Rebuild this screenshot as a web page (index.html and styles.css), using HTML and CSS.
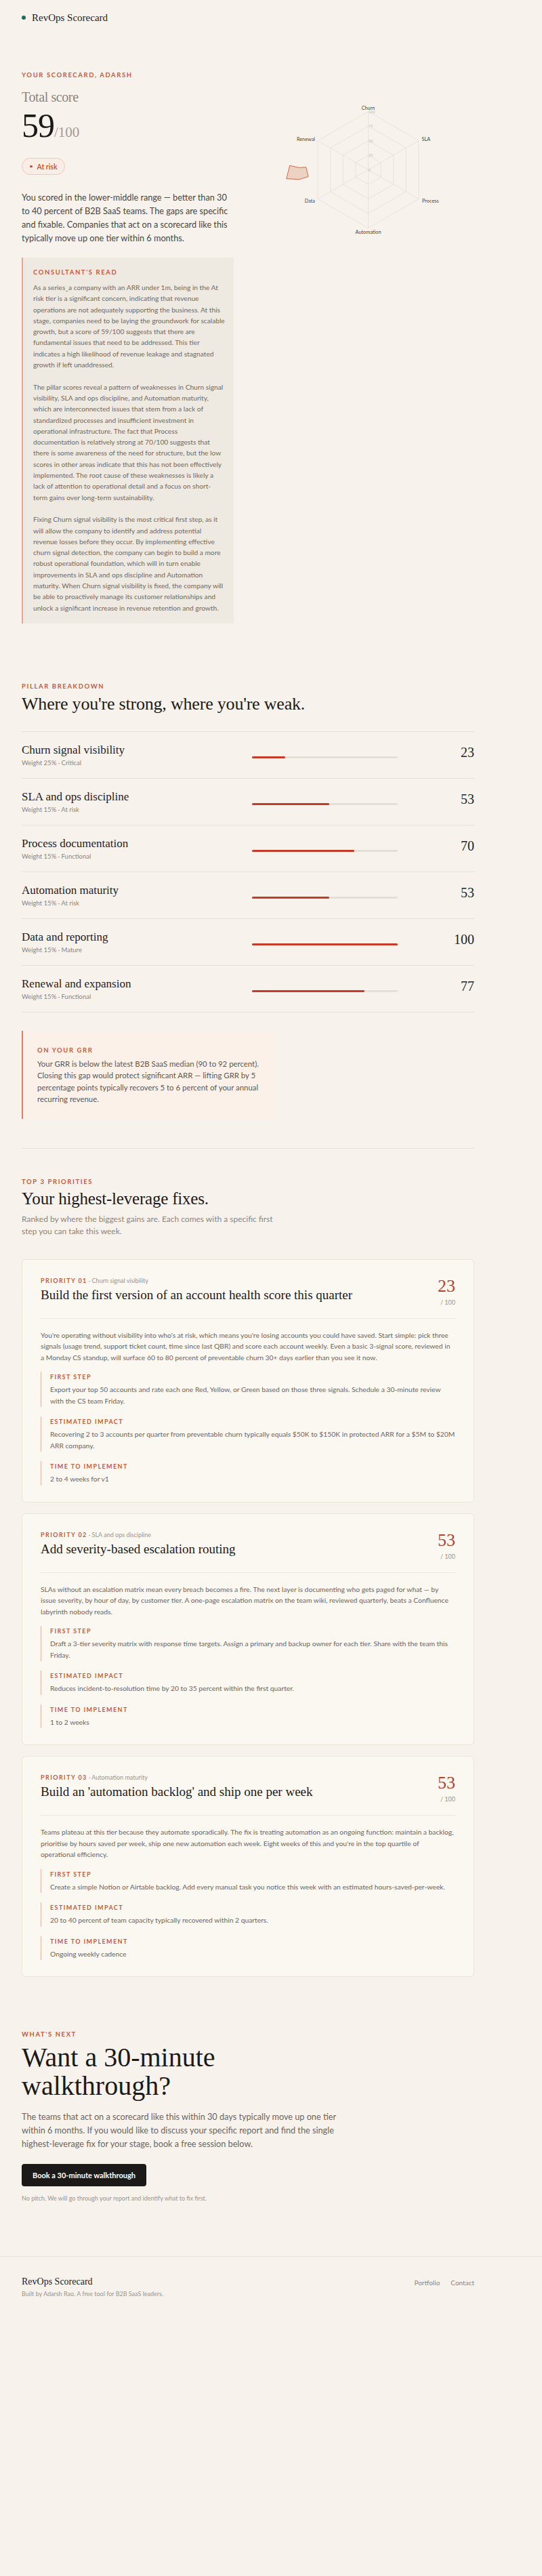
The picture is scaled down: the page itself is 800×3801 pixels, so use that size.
FILE: index.html
```html
<!DOCTYPE html>
<html lang="en">
<head>
<meta charset="utf-8">
<title>RevOps Scorecard</title>
<link rel="stylesheet" href="styles.css">
</head>
<body>
<header class="topbar">
  <span class="brand-dot"></span>
  <span class="brand">RevOps Scorecard</span>
</header>

<main class="wrap">
  <section class="hero">
    <div class="hero-main">
      <p class="eyebrow">Your scorecard, Adarsh</p>
      <p class="total-label">Total score</p>
      <p class="total"><span class="total-num">59</span><span class="total-den">/100</span></p>
      <span class="pill"><span class="pill-dot"></span>At risk</span>
      <p class="lead">You scored in the lower-middle range — better than 30 to 40 percent of B2B SaaS teams. The gaps are specific and fixable. Companies that act on a scorecard like this typically move up one tier within 6 months.</p>
      <div class="read">
        <p class="read-label">Consultant's read</p>
        <p class="read-text">As a series_a company with an ARR under 1m, being in the At risk tier is a significant concern, indicating that revenue operations are not adequately supporting the business. At this stage, companies need to be laying the groundwork for scalable growth, but a score of 59/100 suggests that there are fundamental issues that need to be addressed. This tier indicates a high likelihood of revenue leakage and stagnated growth if left unaddressed.</p>
        <p class="read-text">The pillar scores reveal a pattern of weaknesses in Churn signal visibility, SLA and ops discipline, and Automation maturity, which are interconnected issues that stem from a lack of standardized processes and insufficient investment in operational infrastructure. The fact that Process documentation is relatively strong at 70/100 suggests that there is some awareness of the need for structure, but the low scores in other areas indicate that this has not been effectively implemented. The root cause of these weaknesses is likely a lack of attention to operational detail and a focus on short-term gains over long-term sustainability.</p>
        <p class="read-text">Fixing Churn signal visibility is the most critical first step, as it will allow the company to identify and address potential revenue losses before they occur. By implementing effective churn signal detection, the company can begin to build a more robust operational foundation, which will in turn enable improvements in SLA and ops discipline and Automation maturity. When Churn signal visibility is fixed, the company will be able to proactively manage its customer relationships and unlock a significant increase in revenue retention and growth.</p>
      </div>
    </div>
    <div class="hero-chart">
      <svg class="radar" width="312" height="270" viewBox="388 104 312 270" xmlns="http://www.w3.org/2000/svg">
        <g class="grid-lines" fill="none" stroke="#e4dfd6" stroke-width="0.8">
          <polygon points="543.5,164.5 618,207.5 618,293.5 543.5,336.5 469,293.5 469,207.5"/>
          <polygon points="543.5,186 599.4,218.3 599.4,282.8 543.5,315 487.6,282.8 487.6,218.3"/>
          <polygon points="543.5,207.5 580.7,229 580.7,272 543.5,293.5 506.3,272 506.3,229"/>
          <polygon points="543.5,229 562.1,239.8 562.1,261.3 543.5,272 524.9,261.3 524.9,239.8"/>
          <line x1="543.5" y1="250.5" x2="543.5" y2="164.5"/>
          <line x1="543.5" y1="250.5" x2="618" y2="207.5"/>
          <line x1="543.5" y1="250.5" x2="618" y2="293.5"/>
          <line x1="543.5" y1="250.5" x2="543.5" y2="336.5"/>
          <line x1="543.5" y1="250.5" x2="469" y2="293.5"/>
          <line x1="543.5" y1="250.5" x2="469" y2="207.5"/>
        </g>
        <g class="ticks" font-family="Lato, sans-serif" font-size="5.6" fill="#c4beb5">
          <text x="544" y="166.5">100</text>
          <text x="544" y="188">75</text>
          <text x="544" y="209.5">50</text>
          <text x="544" y="231">25</text>
          <text x="544" y="252.5">0</text>
        </g>
        <g class="axis-labels" font-family="Lato, sans-serif" font-size="7.3" fill="#4a4641">
          <text x="543.5" y="161.5" text-anchor="middle">Churn</text>
          <text x="622.5" y="207.5">SLA</text>
          <text x="623" y="298.8">Process</text>
          <text x="543.5" y="344.8" text-anchor="middle">Automation</text>
          <text x="465" y="298.8" text-anchor="end">Data</text>
          <text x="465" y="207.5" text-anchor="end">Renewal</text>
        </g>
        <polygon class="shape" points="427.7,244.3 441.7,247.3 451.7,246.7 455,260.7 441.7,264.7 422.7,263.7" fill="#ecd2c2" stroke="#cf5a3d" stroke-width="0.9"/>
      </svg>
    </div>
  </section>

  <section class="pillars">
    <p class="eyebrow">Pillar breakdown</p>
    <h2 class="section-title">Where you're strong, where you're weak.</h2>
    <div class="pillar-list">
      <div class="pillar">
        <div class="pillar-info"><p class="pillar-name">Churn signal visibility</p><p class="pillar-meta">Weight 25% · Critical</p></div>
        <div class="bar"><div class="bar-fill" style="width:23%"></div></div>
        <p class="pillar-score">23</p>
      </div>
      <div class="pillar">
        <div class="pillar-info"><p class="pillar-name">SLA and ops discipline</p><p class="pillar-meta">Weight 15% · At risk</p></div>
        <div class="bar"><div class="bar-fill" style="width:53%"></div></div>
        <p class="pillar-score">53</p>
      </div>
      <div class="pillar">
        <div class="pillar-info"><p class="pillar-name">Process documentation</p><p class="pillar-meta">Weight 15% · Functional</p></div>
        <div class="bar"><div class="bar-fill" style="width:70%"></div></div>
        <p class="pillar-score">70</p>
      </div>
      <div class="pillar">
        <div class="pillar-info"><p class="pillar-name">Automation maturity</p><p class="pillar-meta">Weight 15% · At risk</p></div>
        <div class="bar"><div class="bar-fill" style="width:53%"></div></div>
        <p class="pillar-score">53</p>
      </div>
      <div class="pillar">
        <div class="pillar-info"><p class="pillar-name">Data and reporting</p><p class="pillar-meta">Weight 15% · Mature</p></div>
        <div class="bar"><div class="bar-fill" style="width:100%"></div></div>
        <p class="pillar-score">100</p>
      </div>
      <div class="pillar">
        <div class="pillar-info"><p class="pillar-name">Renewal and expansion</p><p class="pillar-meta">Weight 15% · Functional</p></div>
        <div class="bar"><div class="bar-fill" style="width:77%"></div></div>
        <p class="pillar-score">77</p>
      </div>
    </div>

    <div class="grr">
      <p class="grr-label">On your GRR</p>
      <p class="grr-text">Your GRR is below the latest B2B SaaS median (90 to 92 percent). Closing this gap would protect significant ARR — lifting GRR by 5 percentage points typically recovers 5 to 6 percent of your annual recurring revenue.</p>
    </div>
  </section>

  <section class="priorities">
    <p class="eyebrow">Top 3 priorities</p>
    <h2 class="section-title">Your highest-leverage fixes.</h2>
    <p class="section-sub">Ranked by where the biggest gains are. Each comes with a specific first step you can take this week.</p>

    <article class="card">
      <div class="card-head">
        <div>
          <p class="card-kicker"><span class="kicker-num">Priority 01</span> · <span class="kicker-pillar">Churn signal visibility</span></p>
          <h3 class="card-title">Build the first version of an account health score this quarter</h3>
        </div>
        <div class="card-score"><p class="score-num">23</p><p class="score-den">/ 100</p></div>
      </div>
      <p class="card-body">You're operating without visibility into who's at risk, which means you're losing accounts you could have saved. Start simple: pick three signals (usage trend, support ticket count, time since last QBR) and score each account weekly. Even a basic 3-signal score, reviewed in a Monday CS standup, will surface 60 to 80 percent of preventable churn 30+ days earlier than you see it now.</p>
      <div class="detail"><p class="detail-label">First step</p><p class="detail-text">Export your top 50 accounts and rate each one Red, Yellow, or Green based on those three signals. Schedule a 30-minute review with the CS team Friday.</p></div>
      <div class="detail"><p class="detail-label">Estimated impact</p><p class="detail-text">Recovering 2 to 3 accounts per quarter from preventable churn typically equals $50K to $150K in protected ARR for a $5M to $20M ARR company.</p></div>
      <div class="detail"><p class="detail-label">Time to implement</p><p class="detail-text">2 to 4 weeks for v1</p></div>
    </article>

    <article class="card">
      <div class="card-head">
        <div>
          <p class="card-kicker"><span class="kicker-num">Priority 02</span> · <span class="kicker-pillar">SLA and ops discipline</span></p>
          <h3 class="card-title">Add severity-based escalation routing</h3>
        </div>
        <div class="card-score"><p class="score-num">53</p><p class="score-den">/ 100</p></div>
      </div>
      <p class="card-body">SLAs without an escalation matrix mean every breach becomes a fire. The next layer is documenting who gets paged for what — by issue severity, by hour of day, by customer tier. A one-page escalation matrix on the team wiki, reviewed quarterly, beats a Confluence labyrinth nobody reads.</p>
      <div class="detail"><p class="detail-label">First step</p><p class="detail-text">Draft a 3-tier severity matrix with response time targets. Assign a primary and backup owner for each tier. Share with the team this Friday.</p></div>
      <div class="detail"><p class="detail-label">Estimated impact</p><p class="detail-text">Reduces incident-to-resolution time by 20 to 35 percent within the first quarter.</p></div>
      <div class="detail"><p class="detail-label">Time to implement</p><p class="detail-text">1 to 2 weeks</p></div>
    </article>

    <article class="card">
      <div class="card-head">
        <div>
          <p class="card-kicker"><span class="kicker-num">Priority 03</span> · <span class="kicker-pillar">Automation maturity</span></p>
          <h3 class="card-title">Build an 'automation backlog' and ship one per week</h3>
        </div>
        <div class="card-score"><p class="score-num">53</p><p class="score-den">/ 100</p></div>
      </div>
      <p class="card-body">Teams plateau at this tier because they automate sporadically. The fix is treating automation as an ongoing function: maintain a backlog, prioritise by hours saved per week, ship one new automation each week. Eight weeks of this and you're in the top quartile of operational efficiency.</p>
      <div class="detail"><p class="detail-label">First step</p><p class="detail-text">Create a simple Notion or Airtable backlog. Add every manual task you notice this week with an estimated hours-saved-per-week.</p></div>
      <div class="detail"><p class="detail-label">Estimated impact</p><p class="detail-text">20 to 40 percent of team capacity typically recovered within 2 quarters.</p></div>
      <div class="detail"><p class="detail-label">Time to implement</p><p class="detail-text">Ongoing weekly cadence</p></div>
    </article>
  </section>

  <section class="next">
    <p class="eyebrow">What's next</p>
    <h2 class="next-title">Want a 30-minute walkthrough?</h2>
    <p class="next-text">The teams that act on a scorecard like this within 30 days typically move up one tier within 6 months. If you would like to discuss your specific report and find the single highest-leverage fix for your stage, book a free session below.</p>
    <a class="btn" href="#">Book a 30-minute walkthrough</a>
    <p class="next-note">No pitch. We will go through your report and identify what to fix first.</p>
  </section>
</main>

<footer class="footer">
  <div class="footer-inner">
    <div>
      <p class="footer-brand">RevOps Scorecard</p>
      <p class="footer-note">Built by Adarsh Rao. A free tool for B2B SaaS leaders.</p>
    </div>
    <nav class="footer-links"><a href="#">Portfolio</a><a href="#">Contact</a></nav>
  </div>
</footer>
</body>
</html>
```

FILE: styles.css
```css
* { box-sizing: border-box; }
html, body { margin: 0; padding: 0; }
body {
  background: #f7f3ec;
  color: #24211e;
  font-family: Lato, "Noto Sans", sans-serif;
}
p, h2, h3 { margin: 0; }
a { color: inherit; text-decoration: none; }

.topbar {
  display: flex;
  align-items: center;
  gap: 9px;
  padding: 16px 32px 0;
  height: 36px;
}
.brand-dot {
  width: 6px; height: 6px; border-radius: 50%;
  background: #1d6b58;
}
.brand {
  font-family: "Liberation Serif", serif;
  font-size: 15px;
  line-height: 20px;
  color: #24211e;
}

.wrap {
  width: 668px;
  margin-left: 32px;
}

.eyebrow {
  font-size: 9.5px;
  line-height: 14px;
  letter-spacing: 1.6px;
  text-transform: uppercase;
  color: #c65a3e;
  font-weight: 700;
}

.hero {
  display: grid;
  grid-template-columns: 313px 1fr;
  column-gap: 43px;
  margin-top: 68px;
}
.hero-main { display: flex; flex-direction: column; align-items: flex-start; }
.total-label {
  margin-top: 13px;
  font-family: "Liberation Serif", serif;
  font-size: 20px;
  line-height: 24px;
  color: #8b857d;
  letter-spacing: -0.4px;
}
.total {
  margin-top: 4px;
  line-height: 52px;
  font-family: "Liberation Serif", serif;
  white-space: nowrap;
}
.total-num { font-size: 50px; color: #1c1a18; letter-spacing: -1px; }
.total-den { font-size: 21px; color: #a19b93; }
.pill {
  margin-top: 10px;
  display: inline-flex;
  align-items: center;
  gap: 7px;
  height: 25px;
  padding: 0 11px 0 11px;
  border: 1px solid #efc8b6;
  border-radius: 13px;
  background: #f9eee6;
  color: #c24a2e;
  font-size: 10.5px;
  font-weight: 600;
}
.pill-dot { width: 3.5px; height: 3.5px; border-radius: 50%; background: #c24a2e; }
.lead {
  margin-top: 23px;
  font-size: 12.7px;
  line-height: 20px;
  color: #4a4540;
}
.read {
  margin-top: 19px;
  width: 313px;
  background: #efeae1;
  border-left: 2px solid #e2a892;
  padding: 15px 13px 15px 15px;
}
.read-label {
  font-size: 9.5px;
  line-height: 14px;
  letter-spacing: 1.6px;
  text-transform: uppercase;
  color: #c65a3e;
  font-weight: 700;
  margin-bottom: 7px;
}
.read-text {
  font-size: 10.2px;
  line-height: 16.3px;
  color: #6f6962;
}
.read-text + .read-text { margin-top: 16.3px; }

.hero-chart { align-self: start; }
.radar { display: block; }

.pillars { margin-top: 86px; }
.section-title {
  margin-top: 3px;
  font-family: "Liberation Serif", serif;
  font-weight: 400;
  font-size: 26px;
  line-height: 32px;
  color: #1c1a18;
  letter-spacing: -0.2px;
}
.pillar-list {
  margin-top: 24px;
  border-top: 1px solid #e7e2d9;
}
.pillar {
  display: grid;
  grid-template-columns: 340px 215px 1fr;
  align-items: center;
  padding: 16px 0 15px;
  border-bottom: 1px solid #e7e2d9;
}
.pillar-name {
  font-family: "Liberation Serif", serif;
  font-size: 17px;
  line-height: 22px;
  color: #24211e;
}
.pillar-meta {
  margin-top: 1px;
  font-size: 9.5px;
  line-height: 14px;
  color: #8b857d;
}
.bar {
  height: 3px;
  background: #e4e0d8;
  border-radius: 2px;
  margin-top: 6px;
}
.bar-fill { height: 3px; background: #c53b28; border-radius: 2px; }
.pillar-score {
  text-align: right;
  font-family: "Liberation Serif", serif;
  font-size: 20px;
  line-height: 24px;
  align-self: start;
  margin-top: 2px;
  color: #24211e;
}

.grr {
  margin-top: 27px;
  width: 375px;
  background: #fbf1e9;
  border-left: 2px solid #d9806a;
  padding: 22px 14px 20px 21px;
}
.grr-label {
  font-size: 9.5px;
  line-height: 14px;
  letter-spacing: 1.6px;
  text-transform: uppercase;
  color: #c65a3e;
  font-weight: 700;
  margin-bottom: 4px;
}
.grr-text {
  font-size: 11.4px;
  line-height: 17.5px;
  color: #5d5751;
}

.priorities {
  margin-top: 43px;
  border-top: 1px solid #e7e2d9;
  padding-top: 42px;
}
.priorities .section-title { font-size: 25px; line-height: 30px; }
.section-sub {
  margin-top: 6px;
  font-size: 12px;
  line-height: 18px;
  color: #8b857d;
  max-width: 372px;
}
.card {
  margin-top: 32px;
  background: #fbf8f2;
  border: 1px solid #ebe5da;
  border-radius: 6px;
  padding: 25px 27px 24px;
}
.card + .card { margin-top: 16px; }
.card-head {
  display: flex;
  justify-content: space-between;
  align-items: flex-start;
  padding-bottom: 17px;
  border-bottom: 1px solid #ede8df;
}
.card-kicker {
  font-size: 9px;
  line-height: 12px;
  color: #9a948c;
}
.kicker-num {
  color: #c65a3e;
  font-weight: 700;
  letter-spacing: 1.4px;
  text-transform: uppercase;
}
.card-title {
  margin-top: 3px;
  font-family: "Liberation Serif", serif;
  font-weight: 400;
  font-size: 19px;
  line-height: 24px;
  color: #1c1a18;
}
.card-score { text-align: right; }
.score-num {
  font-family: "Liberation Serif", serif;
  font-size: 26px;
  line-height: 28px;
  color: #b5412c;
}
.score-den {
  margin-top: 4px;
  font-size: 9px;
  line-height: 12px;
  color: #9a948c;
}
.card-body {
  margin-top: 16px;
  font-size: 10.3px;
  line-height: 16.5px;
  color: #6b655e;
}
.detail {
  margin-top: 14px;
  border-left: 1px solid #e6b4a2;
  padding: 2px 0 1px 13px;
}
.card-body + .detail { margin-top: 13px; }
.detail-label {
  font-size: 9px;
  line-height: 12px;
  letter-spacing: 1.4px;
  text-transform: uppercase;
  color: #c65a3e;
  font-weight: 700;
  margin-bottom: 4px;
}
.detail-text {
  font-size: 10.3px;
  line-height: 16.5px;
  color: #6b655e;
}

.next { margin-top: 78px; }
.next-title {
  margin-top: 6px;
  font-family: "Liberation Serif", serif;
  font-weight: 400;
  font-size: 40px;
  line-height: 42px;
  color: #1c1a18;
  max-width: 360px;
}
.next-text {
  margin-top: 14px;
  font-size: 12.7px;
  line-height: 20px;
  color: #6b655e;
  max-width: 485px;
}
.btn {
  display: inline-block;
  margin-top: 20px;
  background: #1c1a18;
  color: #fff;
  font-size: 11px;
  font-weight: 700;
  padding: 10px 16px;
  border-radius: 4px;
}
.next-note {
  margin-top: 12px;
  font-size: 9px;
  color: #9a948c;
}

.footer {
  margin-top: 80px;
  border-top: 1px solid #e7e2d9;
  padding: 28px 0 40px 32px;
}
.footer-inner {
  width: 668px;
  display: flex;
  justify-content: space-between;
  align-items: flex-start;
}
.footer-brand {
  font-family: "Liberation Serif", serif;
  font-size: 14px;
  line-height: 18px;
}
.footer-note {
  margin-top: 3px;
  font-size: 9px;
  color: #9a948c;
}
.footer-links { display: flex; gap: 16px; font-size: 10px; color: #8b857d; padding-top: 4px; }
```
